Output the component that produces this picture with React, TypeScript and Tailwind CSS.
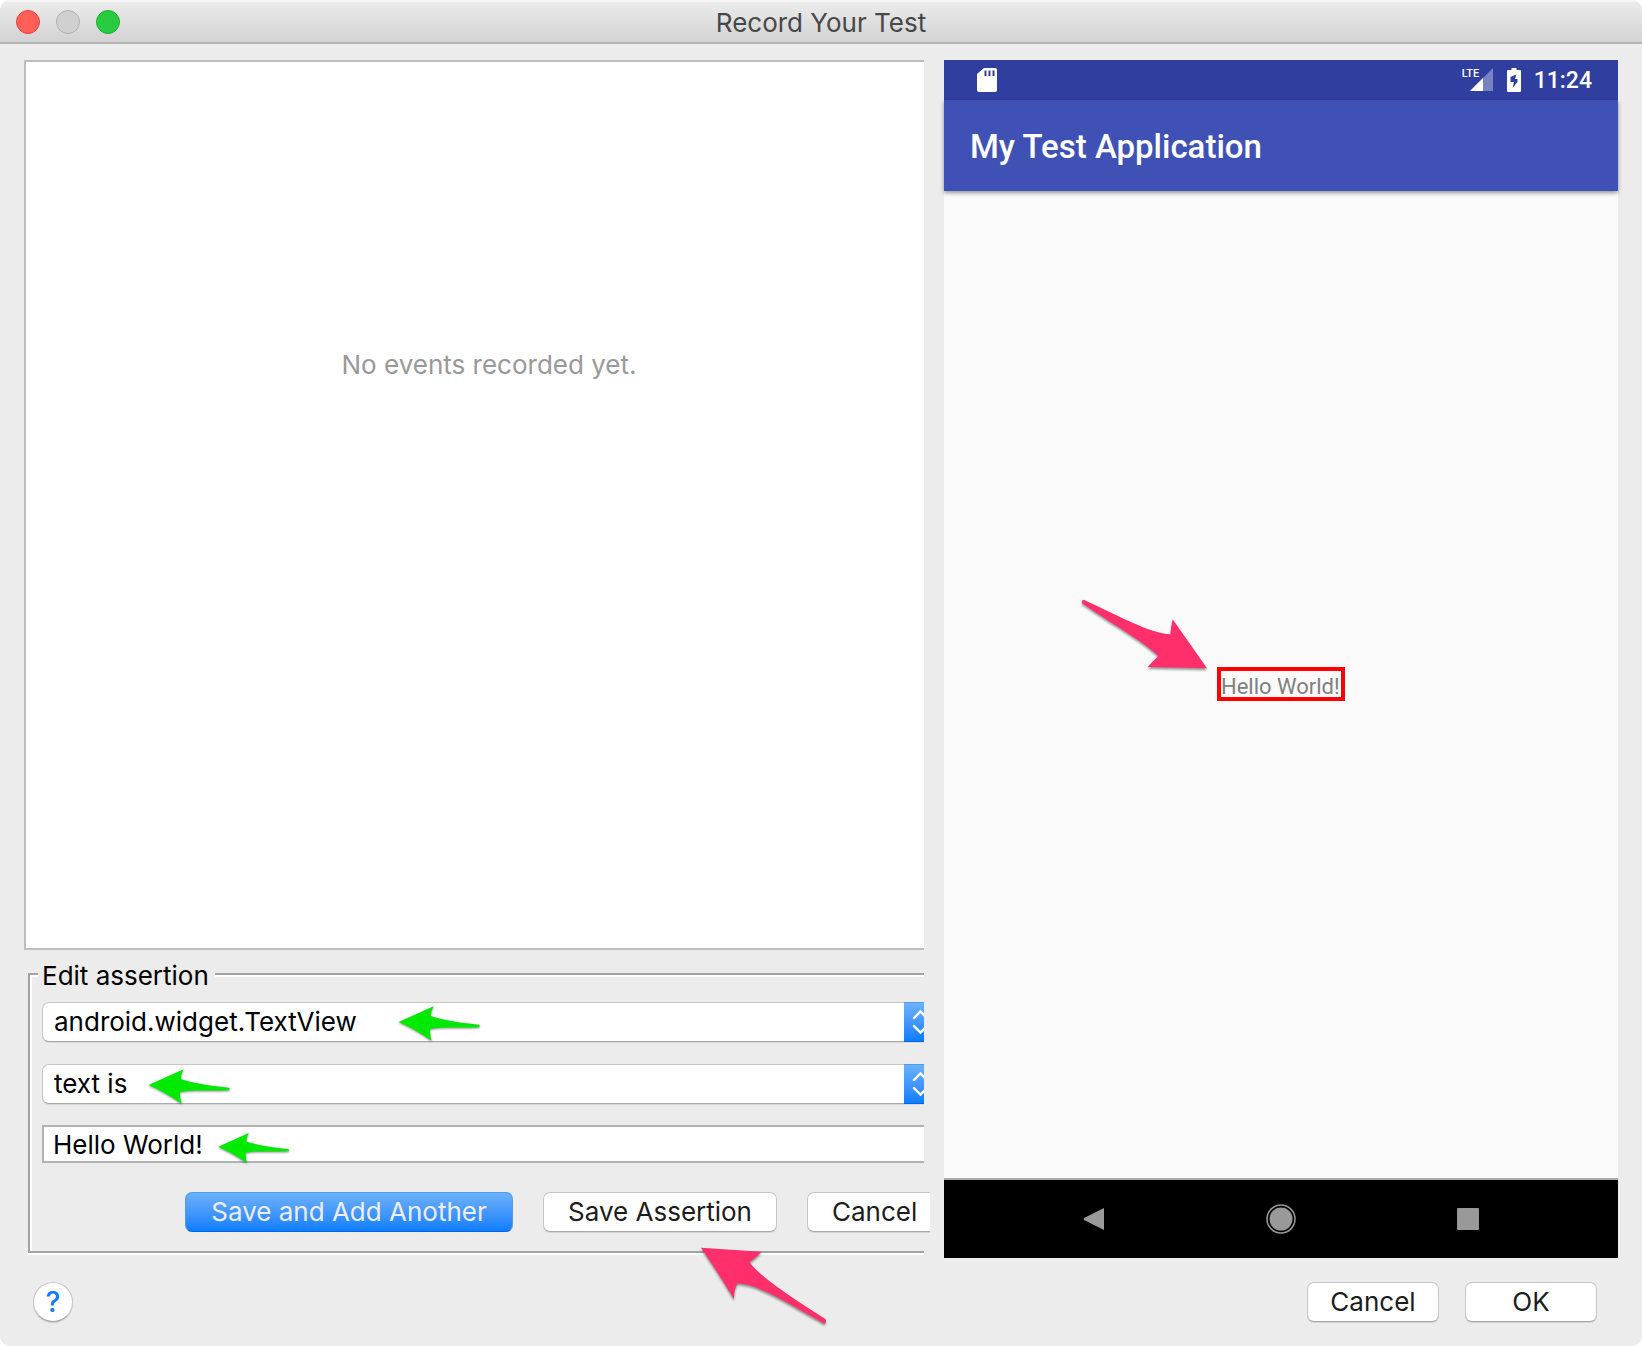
import React from "react";

const GREEN_PATH =
  "M25 84 L130 37 Q122 50 121 66 C150 76 200 86 266 92 Q270 96 266 100 C200 102 150 98 119 105 Q118 122 124 140 Q75 106 25 84 Z";
const PINK_UP_PATH =
  "M12 8 L194 20 Q178 36 158 52 Q190 100 384 221 Q392 228 382 236 C300 192 180 112 120 116 Q110 138 111 162 Q60 78 12 8 Z";
const PINK_DOWN_PATH =
  "M438 262 L335 115 Q330 138 328 160 C270 158 180 108 70 57 Q60 57 63 67 C180 146 240 178 292 225 Q275 240 260 258 Z";

function GreenArrow({ className }: { className: string }) {
  return (
    <svg
      viewBox="17 30 258 120"
      aria-hidden="true"
      className={`pointer-events-none absolute drop-shadow-[0_1px_1px_rgba(0,0,0,0.45)] ${className}`}
    >
      <path d={GREEN_PATH} fill="#00ea00" />
    </svg>
  );
}

function PinkArrow({ path, viewBox, className }: { path: string; viewBox: string; className: string }) {
  return (
    <svg
      viewBox={viewBox}
      aria-hidden="true"
      className={`pointer-events-none absolute drop-shadow-[0_2px_1px_rgba(0,0,0,0.4)] ${className}`}
    >
      <path d={path} fill="#ff2f6c" />
    </svg>
  );
}

function Picker({ label, value, arrow }: { label: string; value: string; arrow: string }) {
  return (
    <div className="relative h-10">
      <select
        aria-label={label}
        className="block h-10 w-full appearance-none rounded-l-[7px] border border-r-0 border-[#c6c6c6] border-b-[#a9a9a9] bg-white pr-8 pl-[11px] shadow-[0_1px_0_rgba(0,0,0,0.08)]"
      >
        <option>{value}</option>
      </select>
      <span className="pointer-events-none absolute inset-y-0 right-0 w-5 overflow-hidden border-y border-t-[#4c9cf0] border-b-[#0a62e8] bg-linear-to-b from-[#6cb1fa] to-[#067dff]">
        <svg width="20" height="38" viewBox="0 0 20 38" fill="none" stroke="#fff" strokeWidth="2.4" strokeLinecap="round">
          <path d="M10 15 L16.500 8.500 L23 15 M10 23 L16.500 29.500 L23 23" />
        </svg>
      </span>
      <GreenArrow className={arrow} />
    </div>
  );
}

const BUTTON =
  "h-10 rounded-[7px] border border-[#c6c6c6] border-b-[#a9a9a9] bg-white text-[#1c1c1c] shadow-[0_1px_0_rgba(0,0,0,0.1)]";

export default function App() {
  return (
    <div className="bg-white">
      <div className="flex min-h-screen flex-col overflow-hidden rounded-[10px] bg-[#ececec] font-['Inter',sans-serif] text-[26px] leading-[30px] text-black">
        <header className="relative flex h-11 items-center justify-center border-t-2 border-b-2 border-t-[#f4f4f4] border-b-[#b4b4b4] bg-linear-to-b from-[#ebebeb] to-[#d3d3d3]">
          <div className="absolute left-4 flex gap-4">
            <button aria-label="Close" className="size-6 rounded-full border border-[#e2463f] bg-[#ff5f57]" />
            <button aria-label="Minimize" className="size-6 rounded-full border border-[#b0b0b0] bg-[#d0d0d0]" />
            <button aria-label="Zoom" className="size-6 rounded-full border border-[#1dad2b] bg-[#29cc41]" />
          </div>
          <h1 className="pt-0.5 text-[#484848]">Record Your Test</h1>
        </header>

        <main className="grid flex-1 grid-cols-[900fr_674fr] gap-5 px-6 pt-4">
          <section className="flex min-w-0 flex-col pb-[5px]">
            <div className="flex-1 border-2 border-r-0 border-[#bebebe] bg-white pt-[288px] pl-7 text-center text-[#999]">
              No events recorded yet.
            </div>

            <fieldset className="relative mt-[7px] ml-1 min-w-0 border-2 border-r-0 border-[#a3a3a3] pt-[11px] pb-[19px] pl-3 shadow-[inset_2px_2px_0_#fff,0_2px_0_#fff]">
              <legend className="-ml-1 bg-[#ececec] pt-1 pr-1.5 pl-1">Edit assertion</legend>
              <div className="flex flex-col">
                <Picker label="Element" value="android.widget.TextView" arrow="left-[354px] top-[2px] w-[86px]" />
                <div className="h-[22px]" />
                <Picker label="Condition" value="text is" arrow="left-[104px] top-[3px] w-[86px]" />
                <div className="relative mt-[21px]">
                  <input
                    aria-label="Expected text"
                    defaultValue="Hello World!"
                    className="block h-[38px] w-full border-2 border-r-0 border-[#b2b2b2] bg-white pl-[9px]"
                  />
                  <GreenArrow className="left-[174px] top-[6px] w-[75px]" />
                </div>
                <div className="-mr-1.5 mt-[29px] flex justify-end gap-[30px]">
                  <button className="h-10 w-[328px] rounded-[7px] border border-[#4c9cf0] border-b-[#0a62e8] bg-linear-to-b from-[#6cb1fa] to-[#067dff] text-[#ededf2]">
                    Save and Add Another
                  </button>
                  <button className={`${BUTTON} w-[234px]`}>Save Assertion</button>
                  <button className={`${BUTTON} w-[123px] rounded-r-none border-r-0 pl-6 text-left`}>Cancel</button>
                </div>
              </div>
              <PinkArrow
                path={PINK_UP_PATH}
                viewBox="0 0 396 246"
                className="right-[95px] bottom-[-76px] z-10 w-[132px]"
              />
            </fieldset>
          </section>

          <section aria-label="Device screen" className="flex min-w-0 flex-col font-['Roboto',sans-serif]">
            <div className="flex h-10 items-center bg-[#303f9f] pr-[26px] pl-[33px] text-white">
              <svg width="20" height="24" viewBox="0 0 20 24" fill="#fff" aria-label="SD card">
                <path
                  fillRule="evenodd"
                  d="M7 0 H18 Q20 0 20 2 V22 Q20 24 18 24 H2 Q0 24 0 22 V6 Z M7.500 2.500 V8 H9.500 V2.500 Z M11.500 2.500 V8 H13.500 V2.500 Z M15.500 2.500 V8 H17.500 V2.500 Z"
                />
              </svg>
              <div className="relative ml-auto h-6 w-[30px]">
                <svg width="30" height="24" viewBox="0 0 30 24" fill="#fff" aria-label="Signal">
                  <path d="M30 0 V23 H7 Z" opacity="0.35" />
                  <path d="M20 10 V23 H7 Z" />
                </svg>
                <span className="absolute top-0 -left-px font-['Roboto',sans-serif] text-[11px] leading-[12px] font-medium">
                  LTE
                </span>
              </div>
              <svg className="ml-[14px]" width="14" height="24" viewBox="0 0 14 24" fill="#fff" aria-label="Battery charging">
                <path
                  fillRule="evenodd"
                  d="M4.500 0 H9.500 V2 H13 Q14 2 14 3.200 V23 Q14 24 13 24 H1 Q0 24 0 23 V3.200 Q0 2 1 2 H4.500 Z M9.500 6.500 L3.500 9 V14 H7 L5.500 20 L10.500 14 V11 H8 Z"
                />
              </svg>
              <time className="ml-[13px] pt-0.5 text-[23px] leading-[28px] font-medium">11:24</time>
            </div>
            <div className="relative flex h-[91px] items-center bg-[#3f51b5] pt-0.5 pl-[26px] text-[33px] leading-10 font-medium text-white shadow-[0_2px_4px_rgba(0,0,0,0.4)]">
              My Test Application
            </div>
            <div className="flex flex-1 items-center justify-center border-b-2 border-[#a9a9a9] bg-[#fafafa]">
              <div className="relative mb-0.5">
                <div className="h-[34px] w-[128px] border-4 border-[#ff0000] text-[22px] leading-[32px] whitespace-nowrap text-[#808080]">
                  Hello World!
                </div>
                <PinkArrow
                  path={PINK_DOWN_PATH}
                  viewBox="54 48 390 225"
                  className="right-[136px] bottom-[29px] w-[130px]"
                />
              </div>
            </div>
            <nav className="grid h-[78px] grid-cols-3 items-center justify-items-center bg-black px-[57px]">
              <button aria-label="Back">
                <svg width="32" height="32" viewBox="0 0 32 32" fill="#999">
                  <path d="M26 5 V27 L6 17 Q5 16 6 15 Z" />
                </svg>
              </button>
              <button aria-label="Home">
                <svg width="32" height="32" viewBox="0 0 32 32">
                  <circle cx="16" cy="16" r="14" fill="none" stroke="#999" strokeWidth="1.500" />
                  <circle cx="16" cy="16" r="11.500" fill="#999" />
                </svg>
              </button>
              <button aria-label="Overview">
                <svg width="32" height="32" viewBox="0 0 32 32" fill="#999">
                  <rect x="5" y="5" width="22" height="22" rx="1" />
                </svg>
              </button>
            </nav>
          </section>
        </main>

        <footer className="flex items-center gap-[26px] py-6 pr-[45px] pl-[33px]">
          <button
            aria-label="Help"
            className="mr-auto size-10 rounded-full border border-[#c6c6c6] border-b-[#a9a9a9] bg-white text-[28px] font-medium text-[#0a7cff] shadow-[0_1px_1px_rgba(0,0,0,0.15)]"
          >
            ?
          </button>
          <button className={`${BUTTON} w-[132px]`}>Cancel</button>
          <button className={`${BUTTON} w-[132px]`}>OK</button>
        </footer>
      </div>
    </div>
  );
}
